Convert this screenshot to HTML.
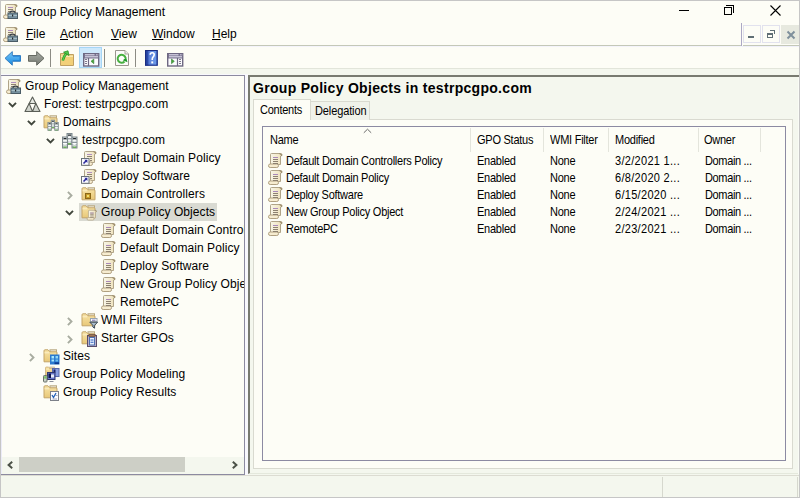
<!DOCTYPE html>
<html><head><meta charset="utf-8">
<style>
*{margin:0;padding:0;box-sizing:border-box}
html,body{width:800px;height:498px;overflow:hidden;background:#fdfdf6;font-family:"Liberation Sans",sans-serif;color:#000}
.a{position:absolute}
.t12{font-size:12px;line-height:14px;white-space:nowrap}
.t11{font-size:11px;line-height:13px;white-space:nowrap;letter-spacing:-0.25px;transform:scaleY(1.1);transform-origin:0 0}
svg{position:absolute;overflow:visible}
</style></head><body>
<svg width="0" height="0" style="position:absolute">
<defs>
<linearGradient id="gFold" x1="0" y1="0" x2="0" y2="1"><stop offset="0" stop-color="#f8e4a8"/><stop offset="1" stop-color="#e8c878"/></linearGradient>
<linearGradient id="gPaper" x1="0" y1="0" x2="1" y2="0"><stop offset="0" stop-color="#f8f6e8"/><stop offset="1" stop-color="#eee0b8"/></linearGradient>
<linearGradient id="gTri" x1="0" y1="0" x2="0" y2="1"><stop offset="0" stop-color="#f4f6f0"/><stop offset="1" stop-color="#c8ccc4"/></linearGradient>
<linearGradient id="gSrv" x1="0" y1="0" x2="1" y2="0"><stop offset="0" stop-color="#a4b0b4"/><stop offset=".5" stop-color="#eef2f2"/><stop offset="1" stop-color="#94a0a4"/></linearGradient>
<linearGradient id="gBlue" x1="0" y1="0" x2="0" y2="1"><stop offset="0" stop-color="#78c8f8"/><stop offset="1" stop-color="#1888e0"/></linearGradient>
<linearGradient id="gGray" x1="0" y1="0" x2="0" y2="1"><stop offset="0" stop-color="#a8aca4"/><stop offset="1" stop-color="#787c74"/></linearGradient>
<linearGradient id="gHelp" x1="0" y1="0" x2="1" y2="0"><stop offset="0" stop-color="#1c3890"/><stop offset=".25" stop-color="#3050b0"/><stop offset=".3" stop-color="#5a80d8"/><stop offset=".85" stop-color="#6a98e8"/><stop offset="1" stop-color="#2848a0"/></linearGradient>
<!-- scroll paper -->
<g id="paper">
 <path d="M3.5 2.5 Q3.5 1.5 4.5 1.5 H13.5 Q15.5 1.5 15 3.5 L13.5 4 V12.5 H3.5 Z" fill="url(#gPaper)" stroke="#b0a488" stroke-width="1"/>
 <path d="M12.5 1.8 Q14.8 1.8 14.6 3.6" fill="none" stroke="#8c7c58" stroke-width="1"/>
 <rect x="1.5" y="12" width="10" height="3.5" rx="1.7" fill="#f6ecd0" stroke="#b0a080" stroke-width="1"/>
</g>
<g id="gpo">
 <use href="#paper"/>
 <path d="M6 5.5H11M6 7.5H11M6 9.5H11M6 11.5H11" stroke="#8c8070" stroke-width="1"/>
 <path d="M6 5.5H11" stroke="#a888b8" stroke-width="1"/>
</g>
<g id="gpm">
 <use href="#paper"/>
 <path d="M6 4.5H11M6 6.5H11M6 8.5H10" stroke="#8c8070" stroke-width="1"/>
 <path d="M6 4.5H11" stroke="#b090c0" stroke-width="1"/>
 <path d="M8 10 Q8 8.2 10.5 8.2 Q13 8.2 13 10" fill="none" stroke="#3a4048" stroke-width="1.2"/>
 <rect x="6" y="10" width="9.5" height="5.5" fill="#7892a0" stroke="#4a5c66" stroke-width="1"/>
 <path d="M6.5 12.5H15" stroke="#a8c0c8" stroke-width="1"/>
 <rect x="10" y="11.5" width="1.2" height="2" fill="#20282c"/>
</g>
<g id="link">
 <use href="#paper"/>
 <path d="M6 4.5H11M6 6.5H11M9 8.5H11M9 10.5H11" stroke="#8c8070" stroke-width="1"/>
 <path d="M6 4.5H11" stroke="#b090c0" stroke-width="1"/>
 <rect x="0.5" y="8.5" width="7.5" height="6.8" fill="#fbfbff" stroke="#6a7278" stroke-width="1"/>
 <path d="M2.5 13.5 L5.5 10.5" fill="none" stroke="#2a2a9a" stroke-width="1.6"/>
 <path d="M3.3 9.8 H6.4 V12.9 Z" fill="#2a2a9a"/>
</g>
<g id="tri">
 <path d="M8.5 1 L16 15.5 H1 Z" fill="url(#gTri)" stroke="#5a5e56" stroke-width="1.1" stroke-linejoin="round"/>
 <path d="M5.2 7.5 H11.8 L8.5 15.5 Z" fill="#fdfdf6" stroke="#5a5e56" stroke-width="1.1" stroke-linejoin="round"/>
</g>
<g id="folder">
 <rect x="7.5" y="1.5" width="6.5" height="4" fill="#ece6d4" stroke="#b8a880" stroke-width="1"/>
 <path d="M1.5 2.5 Q1.5 1.5 2.5 1.5 H5.5 L7.5 3.5 H13.5 Q14.5 3.5 14.5 4.5 V13.5 H1.5 Z" fill="url(#gFold)" stroke="#c4a468" stroke-width="1"/>
 <path d="M2 4.5 H6.5" stroke="#fcf0c8" stroke-width="1"/>
</g>
<g id="srv1">
 <rect x="0.5" y="0.5" width="5" height="11" fill="url(#gSrv)" stroke="#7c888c" stroke-width="1"/>
 <rect x="1.5" y="1.5" width="3" height="1.2" rx=".5" fill="#1e2426"/>
 <path d="M1 4.5H5M1 7H5" stroke="#fafcfc" stroke-width="1.3"/>
 <path d="M1 5.8H5" stroke="#5c6a70" stroke-width=".8"/>
 <path d="M1 9H5" stroke="#c8d0d0" stroke-width="1"/>
 <rect x="1.5" y="10" width="3" height="1.5" fill="#6cb058"/>
</g>
<g id="servers">
 <use href="#srv1" x="4.5" y="1"/>
 <use href="#srv1" x="0" y="4.5"/>
 <use href="#srv1" x="9.5" y="4.5"/>
</g>
<g id="domains">
 <use href="#folder" transform="translate(-0.5,0.3)"/>
 <g transform="translate(4.5,5) scale(0.72)"><use href="#servers"/></g>
</g>
<g id="ou">
 <use href="#folder" transform="translate(-0.5,0.3)"/>
 <rect x="4.5" y="7.5" width="5" height="5" fill="#c89828" stroke="#8a6818" stroke-width="1"/>
 <rect x="6" y="9" width="2" height="2" fill="#f0e070"/>
</g>
<g id="gpofolder">
 <use href="#folder" transform="translate(-0.5,0.3)"/>
 <g transform="translate(5,5.2) scale(0.7)"><use href="#gpo"/></g>
</g>
<g id="wmi">
 <use href="#folder" transform="translate(-0.5,0.3)"/>
 <rect x="9.5" y="6.5" width="6.5" height="3.2" fill="#fcfcff" stroke="#98a4b0" stroke-width="1"/>
 <path d="M11 8.2H14.5" stroke="#7068a8" stroke-width="1"/>
 <path d="M8.8 10.2 H16.6 L13.6 13.3 V16.2 L11.8 15 V13.3 Z" fill="#a8bccc" stroke="#3c4854" stroke-width="1" stroke-linejoin="round"/>
</g>
<g id="starter">
 <use href="#folder" transform="translate(-0.5,0.3)"/>
 <rect x="6.5" y="5.5" width="9" height="11" fill="#b8b0c8" stroke="#5a4c6a" stroke-width="1"/>
 <rect x="8" y="4.5" width="6" height="2" fill="#a07858" stroke="#705040" stroke-width=".8"/>
 <rect x="8.5" y="7.5" width="5" height="7.5" fill="#e8f0fc" stroke="#5070b0" stroke-width="1"/>
 <path d="M9.5 10H12.5M9.5 12.3H12.5" stroke="#3060c0" stroke-width="1.1"/>
</g>
<g id="sites">
 <use href="#folder" transform="translate(-0.5,0.3)"/>
 <rect x="7" y="6.5" width="9.5" height="10" fill="#2a7ad0"/>
 <rect x="8.5" y="8" width="2.5" height="2.5" fill="#a8e8fc"/><rect x="12.5" y="8" width="2.5" height="2.5" fill="#8cd8f8"/>
 <rect x="8.5" y="11.5" width="2.5" height="2" fill="#a8e8fc"/><rect x="12.5" y="11.5" width="2.5" height="2" fill="#6cc0f0"/>
 <rect x="11.5" y="14.3" width="4.5" height="1.8" fill="#0a3a90"/>
</g>
<g id="modeling">
 <g transform="translate(1.5,0) scale(0.7)"><use href="#folder"/></g>
 <rect x="9.5" y="2.5" width="6.5" height="8" fill="#8aa0e0" stroke="#5868a8" stroke-width="1"/>
 <rect x="10.5" y="3.5" width="2" height="3" fill="#1a2060"/>
 <rect x="4.5" y="6.5" width="7.5" height="7" fill="#6878c8" stroke="#303870" stroke-width="1"/>
 <rect x="5.5" y="7.5" width="2.5" height="4.5" fill="#0c1448"/>
 <rect x="8" y="8.5" width="3" height="3" fill="#e8ecf8"/>
 <path d="M6.5 15.5H10.5" stroke="#8c9098" stroke-width="1"/>
 <rect x="0.5" y="9.5" width="3.5" height="6.5" rx=".8" fill="#c8d0c8" stroke="#687068" stroke-width="1"/>
 <rect x="1.2" y="10.2" width="2.2" height="2.4" fill="#78c060"/>
</g>
<g id="results">
 <use href="#folder" transform="translate(-0.5,0.3)"/>
 <rect x="7.5" y="7.5" width="8" height="9" fill="#fcfcff" stroke="#7c8088" stroke-width="1"/>
 <path d="M9 11 L10.5 13.5 L13 9" fill="none" stroke="#2060b8" stroke-width="1.3"/>
 <path d="M12.5 11.5H14.5M9.5 15H14" stroke="#8890a8" stroke-width=".8"/>
</g>
<path id="chevD" d="M0.5 0.5 L4 4 L7.5 0.5" fill="none" stroke="#404040" stroke-width="1.3"/>
<path id="chevR" d="M0.5 0.5 L4 4 L0.5 7.5" fill="none" stroke="#a8a8a8" stroke-width="1.3"/>
</defs></svg>

<!-- window border -->


<!-- title bar -->
<div class="a t12" style="left:23px;top:5px">Group Policy Management</div>
<!-- caption buttons -->
<div class="a" style="left:679px;top:10px;width:10px;height:1px;background:#000"></div>
<div class="a" style="left:724px;top:7px;width:8px;height:8px;border:1px solid #000"></div>
<div class="a" style="left:726px;top:5px;width:8px;height:8px;border-top:1px solid #000;border-right:1px solid #000"></div>
<svg style="left:770px;top:5px" width="11" height="11"><path d="M0.5 0.5L10.5 10.5M10.5 0.5L0.5 10.5" stroke="#000" stroke-width="1.1"/></svg>

<!-- menu bar -->
<div class="a t12" style="left:26px;top:27px"><u>F</u>ile</div>
<div class="a t12" style="left:60px;top:27px"><u>A</u>ction</div>
<div class="a t12" style="left:111px;top:27px"><u>V</u>iew</div>
<div class="a t12" style="left:152px;top:27px"><u>W</u>indow</div>
<div class="a t12" style="left:212px;top:27px"><u>H</u>elp</div>
<div class="a" style="left:1px;top:45px;width:741px;height:1px;background:#c4c8b8"></div>
<div class="a" style="left:1px;top:46px;width:798px;height:1px;background:#f4f4fb"></div>
<div class="a" style="left:741px;top:23px;width:1px;height:23px;background:#aca8c4"></div>
<div class="a" style="left:743px;top:45px;width:56px;height:1px;background:#c4c8b8"></div>
<div class="a" style="left:742px;top:46px;width:57px;height:1px;background:#f0f0fa"></div>
<!-- MDI buttons -->
<div class="a" style="left:743px;top:25px;width:18px;height:18px;border:1px solid #e2e2ee"></div>
<div class="a" style="left:748px;top:36px;width:6px;height:2px;background:#5f6e74"></div>
<div class="a" style="left:762px;top:25px;width:18px;height:18px;border:1px solid #e2e2ee"></div>
<div class="a" style="left:767px;top:33px;width:6px;height:5px;border:1px solid #5f6e74;border-top-width:2px"></div>
<div class="a" style="left:770px;top:30px;width:5px;height:4px;border-top:1px solid #5f6e74;border-right:1px solid #5f6e74"></div>
<div class="a" style="left:781px;top:25px;width:18px;height:19px;background:#e7e9df"></div>
<svg style="left:787px;top:31px" width="8" height="8"><path d="M0.5 0.5L7.5 7.5M7.5 0.5L0.5 7.5" stroke="#7f909c" stroke-width="2"/></svg>

<!-- toolbar -->
<div class="a" style="left:79px;top:47px;width:23px;height:21px;background:#cde8fb;border:1px solid #a6d6f6"></div>
<div class="a" style="left:50px;top:49px;width:1px;height:18px;background:#8c8c84"></div>
<div class="a" style="left:104px;top:49px;width:1px;height:18px;background:#8c8c84"></div>
<div class="a" style="left:135px;top:49px;width:1px;height:18px;background:#8c8c84"></div>
<div class="a" style="left:1px;top:68px;width:798px;height:1px;background:#e2e5da"></div>
<div class="a" style="left:1px;top:69px;width:798px;height:406px;background:#f4f7ee"></div>

<!-- tb -->
<svg style="left:2px;top:3px" width="16" height="16"><use href="#gpm"/></svg>
<svg style="left:2px;top:26px" width="16" height="16"><use href="#gpm"/></svg>
<!-- back -->
<svg style="left:4px;top:51px" width="18" height="16"><path d="M1 7.3 L8.3 0.6 V4.5 H16.5 V10.3 H8.3 V14.2 Z" fill="url(#gBlue)" stroke="#3a80c0" stroke-width="1" stroke-linejoin="round"/><path d="M9 5.5 H16 V9.5 H9" fill="none" stroke="#1878d0" stroke-width="1.2" opacity=".6"/></svg>
<!-- forward -->
<svg style="left:27px;top:51px" width="18" height="16"><path d="M17 7.3 L9.7 0.6 V4.5 H1.5 V10.3 H9.7 V14.2 Z" fill="url(#gGray)" stroke="#646860" stroke-width="1" stroke-linejoin="round"/></svg>
<!-- folder up -->
<svg style="left:59px;top:50px" width="17" height="17">
 <path d="M1.5 3.5 H6 L7 4.5 H14.5 V15.5 H1.5 Z" fill="#f0d890" stroke="#c0a060" stroke-width="1"/>
 <path d="M2 6.5 H14" stroke="#f8e8b0" stroke-width="1.2"/>
 <rect x="2" y="7" width="12" height="8" fill="#f2d078"/>
 <path d="M3.8 10.5 Q5 6 7.5 3.2" fill="none" stroke="#2e9a2a" stroke-width="2.6"/>
 <path d="M3.8 10.5 Q5 6 7.5 3.2" fill="none" stroke="#58d050" stroke-width="1.2"/>
 <path d="M4.5 2.2 L9 0.8 L10 5.5 Z" fill="#50c848" stroke="#2a9028" stroke-width=".8"/>
</svg>
<!-- show/hide tree (pressed) -->
<svg style="left:83px;top:53px" width="17" height="14">
 <rect x="0.7" y="0.7" width="15" height="12.3" fill="#fbfbfd" stroke="#6e6882" stroke-width="1.4"/>
 <rect x="1" y="1" width="14.5" height="4.5" fill="#7a7490"/>
 <path d="M2 1.8H11.5M2 3.8H15" stroke="#e8e6f4" stroke-width="1"/>
 <path d="M13 1.8H13.8M14.5 1.8H15.2" stroke="#e8e6f4" stroke-width="1"/>
 <path d="M5.5 5 V13" stroke="#6e6882" stroke-width="1.2"/>
 <path d="M2.2 6.5H3.8M2.2 8.5H3.8M2.2 10.5H3.8" stroke="#5e5870" stroke-width="1.1"/>
 <path d="M10.8 6 L8 8.3 L10.8 10.7 Z" fill="#48a838" stroke="#38803a" stroke-width=".6"/>
</svg>
<!-- refresh -->
<svg style="left:114px;top:49px" width="16" height="18">
 <path d="M1.5 1.5 H11 L14.5 5 V16.5 H1.5 Z" fill="#fcfcfa" stroke="#9a968e" stroke-width="1"/>
 <path d="M11 1.5 V5 H14.5" fill="#f0f0ec" stroke="#a8a49c" stroke-width="1"/>
 <path d="M10.5 12.5 A4 4 0 1 1 11.6 9.2" fill="none" stroke="#48b040" stroke-width="2"/>
 <path d="M8.8 11.2 L13.5 13.2 L12.2 8.6 Z" fill="#1e9a28"/>
</svg>
<!-- help -->
<svg style="left:145px;top:50px" width="13" height="16">
 <rect x="0" y="0" width="12.7" height="15.7" fill="url(#gHelp)"/>
 <rect x="0.5" y="0.5" width="11.7" height="14.7" fill="none" stroke="#1a2c80" stroke-width="1"/>
 <path d="M5.2 4.8 Q5.2 2.8 7.2 2.8 Q9.2 2.8 9.2 4.8 Q9.2 6 8 7.1 Q7.2 7.9 7.2 9.9" fill="none" stroke="#fff" stroke-width="1.6"/>
 <rect x="6.3" y="11.4" width="1.9" height="2" fill="#fff"/>
</svg>
<!-- show/hide action pane -->
<svg style="left:167px;top:53px" width="17" height="14">
 <rect x="0.7" y="0.7" width="15" height="12.3" fill="#fbfbfd" stroke="#6e6882" stroke-width="1.4"/>
 <rect x="1" y="1" width="14.5" height="4.5" fill="#7a7490"/>
 <path d="M2 1.8H11.5M2 3.8H15" stroke="#e8e6f4" stroke-width="1"/>
 <path d="M13 1.8H13.8M14.5 1.8H15.2" stroke="#e8e6f4" stroke-width="1"/>
 <path d="M10.5 5 V13" stroke="#6e6882" stroke-width="1.2"/>
 <path d="M12.2 6.5H13.8M12.2 8.5H13.8M12.2 10.5H13.8" stroke="#5e5870" stroke-width="1.1"/>
 <path d="M4.5 6 L7.3 8.3 L4.5 10.7 Z" fill="#48a838" stroke="#38803a" stroke-width=".6"/>
</svg>
<!-- /tb -->
<!-- left panel -->
<div class="a" style="left:1px;top:74px;width:247px;height:401px;background:#f8f8fd"></div>
<div class="a" style="left:1px;top:75px;width:244px;height:400px;border-top:1px solid #8c8aa0;border-right:1px solid #8c8aa0;border-bottom:1px solid #8c8aa0;background:#fdfdf6"></div>

<div class="a" style="left:1px;top:76px;width:1px;height:398px;background:#ececf8"></div>
<!-- tree -->
<div class="a" style="left:2px;top:76px;width:242px;height:381px;overflow:hidden">
<svg style="left:3px;top:2px" width="16" height="16"><use href="#gpm"/></svg>
<div class="a t12" style="left:23px;top:3px;letter-spacing:0.07px">Group Policy Management</div>
<svg style="left:6px;top:26px" width="10" height="6"><path d="M0.9 0.9 L4.5 4.5 L8 0.9" fill="none" stroke="#40463c" stroke-width="1.9"/></svg>
<svg style="left:22px;top:20px" width="16" height="16"><use href="#tri"/></svg>
<div class="a t12" style="left:42px;top:21px;letter-spacing:0.07px">Forest: testrpcgpo.com</div>
<svg style="left:25px;top:44px" width="10" height="6"><path d="M0.9 0.9 L4.5 4.5 L8 0.9" fill="none" stroke="#40463c" stroke-width="1.9"/></svg>
<svg style="left:41px;top:38px" width="16" height="16"><use href="#domains"/></svg>
<div class="a t12" style="left:61px;top:39px;letter-spacing:0.07px">Domains</div>
<svg style="left:44px;top:62px" width="10" height="6"><path d="M0.9 0.9 L4.5 4.5 L8 0.9" fill="none" stroke="#40463c" stroke-width="1.9"/></svg>
<svg style="left:60px;top:56px" width="16" height="16"><use href="#servers"/></svg>
<div class="a t12" style="left:80px;top:57px;letter-spacing:0.07px">testrpcgpo.com</div>
<svg style="left:79px;top:74px" width="16" height="16"><use href="#link"/></svg>
<div class="a t12" style="left:99px;top:75px;letter-spacing:0.07px">Default Domain Policy</div>
<svg style="left:79px;top:92px" width="16" height="16"><use href="#link"/></svg>
<div class="a t12" style="left:99px;top:93px;letter-spacing:0.07px">Deploy Software</div>
<svg style="left:65px;top:115px" width="6" height="10"><path d="M0.9 0.9 L4.5 4.5 L0.9 8.1" fill="none" stroke="#a8aca0" stroke-width="1.9"/></svg>
<svg style="left:79px;top:110px" width="16" height="16"><use href="#ou"/></svg>
<div class="a t12" style="left:99px;top:111px;letter-spacing:0.07px">Domain Controllers</div>
<div class="a" style="left:77px;top:127px;width:138px;height:18px;background:#d9dad2"></div>
<svg style="left:63px;top:134px" width="10" height="6"><path d="M0.9 0.9 L4.5 4.5 L8 0.9" fill="none" stroke="#40463c" stroke-width="1.9"/></svg>
<svg style="left:79px;top:128px" width="16" height="16"><use href="#gpofolder"/></svg>
<div class="a t12" style="left:99px;top:129px;letter-spacing:0.07px">Group Policy Objects</div>
<svg style="left:98px;top:146px" width="16" height="16"><use href="#gpo"/></svg>
<div class="a t12" style="left:118px;top:147px;letter-spacing:0.07px">Default Domain Controllers Policy</div>
<svg style="left:98px;top:164px" width="16" height="16"><use href="#gpo"/></svg>
<div class="a t12" style="left:118px;top:165px;letter-spacing:0.07px">Default Domain Policy</div>
<svg style="left:98px;top:182px" width="16" height="16"><use href="#gpo"/></svg>
<div class="a t12" style="left:118px;top:183px;letter-spacing:0.07px">Deploy Software</div>
<svg style="left:98px;top:200px" width="16" height="16"><use href="#gpo"/></svg>
<div class="a t12" style="left:118px;top:201px;letter-spacing:0.07px">New Group Policy Object</div>
<svg style="left:98px;top:218px" width="16" height="16"><use href="#gpo"/></svg>
<div class="a t12" style="left:118px;top:219px;letter-spacing:0.07px">RemotePC</div>
<svg style="left:65px;top:241px" width="6" height="10"><path d="M0.9 0.9 L4.5 4.5 L0.9 8.1" fill="none" stroke="#a8aca0" stroke-width="1.9"/></svg>
<svg style="left:79px;top:236px" width="16" height="16"><use href="#wmi"/></svg>
<div class="a t12" style="left:99px;top:237px;letter-spacing:0.07px">WMI Filters</div>
<svg style="left:65px;top:259px" width="6" height="10"><path d="M0.9 0.9 L4.5 4.5 L0.9 8.1" fill="none" stroke="#a8aca0" stroke-width="1.9"/></svg>
<svg style="left:79px;top:254px" width="16" height="16"><use href="#starter"/></svg>
<div class="a t12" style="left:99px;top:255px;letter-spacing:0.07px">Starter GPOs</div>
<svg style="left:27px;top:277px" width="6" height="10"><path d="M0.9 0.9 L4.5 4.5 L0.9 8.1" fill="none" stroke="#a8aca0" stroke-width="1.9"/></svg>
<svg style="left:41px;top:272px" width="16" height="16"><use href="#sites"/></svg>
<div class="a t12" style="left:61px;top:273px;letter-spacing:0.07px">Sites</div>
<svg style="left:41px;top:290px" width="16" height="16"><use href="#modeling"/></svg>
<div class="a t12" style="left:61px;top:291px;letter-spacing:0.07px">Group Policy Modeling</div>
<svg style="left:41px;top:308px" width="16" height="16"><use href="#results"/></svg>
<div class="a t12" style="left:61px;top:309px;letter-spacing:0.07px">Group Policy Results</div>
</div>
<div class="a" style="left:2px;top:457px;width:242px;height:17px;background:#f4f7ee"></div>
<div class="a" style="left:19px;top:457px;width:166px;height:15px;background:#cdcfc6"></div>
<svg style="left:7px;top:461px" width="6" height="8"><path d="M5.2 0.8 L1.6 4 L5.2 7.2" fill="none" stroke="#4c5248" stroke-width="2"/></svg>
<svg style="left:232px;top:461px" width="6" height="8"><path d="M0.8 0.8 L4.4 4 L0.8 7.2" fill="none" stroke="#4c5248" stroke-width="2"/></svg>
<!-- /tree -->
<!-- right panel -->
<div class="a" style="left:248px;top:75px;width:552px;height:399px;border-top:2px solid #787a70;border-left:2px solid #787a70;border-bottom:1px solid #e4e8dc;background:#f4f7ee"></div>

<div class="a x798line" style="left:798px;top:77px;width:1px;height:397px;background:#fafcf6"></div>
<!-- rp -->
<div class="a" style="left:253px;top:80px;font-size:14px;line-height:16px;font-weight:bold;letter-spacing:0.3px;white-space:nowrap">Group Policy Objects in testrpcgpo.com</div>
<div class="a" style="left:253px;top:119px;width:540px;height:350px;background:#fdfdf6;border:1px solid #d9dad0"></div>
<div class="a" style="left:310px;top:101px;width:60px;height:19px;background:#f0f2ea;border:1px solid #d9dad0;border-bottom:none"></div>
<div class="a" style="left:253px;top:99px;width:58px;height:21px;background:#fdfdf6;border:1px solid #d9dad0;border-bottom:none"></div>
<div class="a t11" style="left:260px;top:103px">Contents</div>
<div class="a t11" style="left:315px;top:104px;letter-spacing:-0.12px">Delegation</div>
<div class="a" style="left:262px;top:126px;width:524px;height:335px;border:1px solid #8c8aa2;background:#fdfdf6"></div>
<svg style="left:363px;top:128px" width="9" height="6"><path d="M0.8 4.8 L4.5 1.2 L8.2 4.8" fill="none" stroke="#6a6a6a" stroke-width="1"/></svg>
<div class="a" style="left:470px;top:128px;width:1px;height:24px;background:#e4e5dc"></div>
<div class="a" style="left:543px;top:128px;width:1px;height:24px;background:#e4e5dc"></div>
<div class="a" style="left:608px;top:128px;width:1px;height:24px;background:#e4e5dc"></div>
<div class="a" style="left:698px;top:128px;width:1px;height:24px;background:#e4e5dc"></div>
<div class="a" style="left:760px;top:128px;width:1px;height:24px;background:#e4e5dc"></div>
<div class="a t11" style="left:270px;top:133px">Name</div>
<div class="a t11" style="left:477px;top:133px">GPO Status</div>
<div class="a t11" style="left:550px;top:133px">WMI Filter</div>
<div class="a t11" style="left:615px;top:133px">Modified</div>
<div class="a t11" style="left:704px;top:133px">Owner</div>
<svg style="left:267px;top:152px" width="16" height="16"><use href="#gpo"/></svg>
<div class="a t11" style="left:286px;top:154px">Default Domain Controllers Policy</div>
<div class="a t11" style="left:477px;top:154px">Enabled</div>
<div class="a t11" style="left:550px;top:154px">None</div>
<div class="a t11" style="left:615px;top:154px;letter-spacing:0.3px">3/2/2021 1...</div>
<div class="a t11" style="left:705px;top:154px;letter-spacing:-0.35px">Domain ...</div>
<svg style="left:267px;top:169px" width="16" height="16"><use href="#gpo"/></svg>
<div class="a t11" style="left:286px;top:171px">Default Domain Policy</div>
<div class="a t11" style="left:477px;top:171px">Enabled</div>
<div class="a t11" style="left:550px;top:171px">None</div>
<div class="a t11" style="left:615px;top:171px;letter-spacing:0.3px">6/8/2020 2...</div>
<div class="a t11" style="left:705px;top:171px;letter-spacing:-0.35px">Domain ...</div>
<svg style="left:267px;top:186px" width="16" height="16"><use href="#gpo"/></svg>
<div class="a t11" style="left:286px;top:188px">Deploy Software</div>
<div class="a t11" style="left:477px;top:188px">Enabled</div>
<div class="a t11" style="left:550px;top:188px">None</div>
<div class="a t11" style="left:615px;top:188px;letter-spacing:0.3px">6/15/2020 ...</div>
<div class="a t11" style="left:705px;top:188px;letter-spacing:-0.35px">Domain ...</div>
<svg style="left:267px;top:203px" width="16" height="16"><use href="#gpo"/></svg>
<div class="a t11" style="left:286px;top:205px">New Group Policy Object</div>
<div class="a t11" style="left:477px;top:205px">Enabled</div>
<div class="a t11" style="left:550px;top:205px">None</div>
<div class="a t11" style="left:615px;top:205px;letter-spacing:0.3px">2/24/2021 ...</div>
<div class="a t11" style="left:705px;top:205px;letter-spacing:-0.35px">Domain ...</div>
<svg style="left:267px;top:220px" width="16" height="16"><use href="#gpo"/></svg>
<div class="a t11" style="left:286px;top:222px">RemotePC</div>
<div class="a t11" style="left:477px;top:222px">Enabled</div>
<div class="a t11" style="left:550px;top:222px">None</div>
<div class="a t11" style="left:615px;top:222px;letter-spacing:0.3px">2/23/2021 ...</div>
<div class="a t11" style="left:705px;top:222px;letter-spacing:-0.35px">Domain ...</div>
<!-- /rp -->
<!-- status bar -->
<div class="a" style="left:1px;top:475px;width:798px;height:1px;background:#dcdcd2"></div>
<div class="a" style="left:1px;top:476px;width:798px;height:21px;background:#f4f7ee"></div>
<div class="a" style="left:662px;top:477px;width:1px;height:20px;background:#d6d8ce"></div>
<div class="a" style="left:797px;top:477px;width:1px;height:20px;background:#d6d8ce"></div>
<div class="a" style="left:0;top:497px;width:800px;height:1px;background:#c6c6c6"></div>
<div class="a" style="left:0;top:0;width:800px;height:498px;border:1px solid #c6c6c6"></div>
</body></html>
